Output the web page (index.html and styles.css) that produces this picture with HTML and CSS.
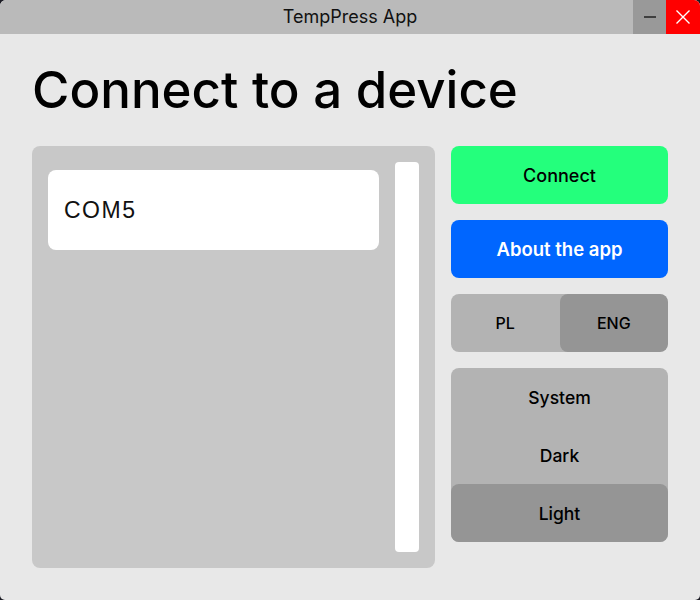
FILE: index.html
```html
<!DOCTYPE html>
<html>
<head>
<meta charset="utf-8">
<link rel="stylesheet" href="styles.css">
</head>
<body>
<div class="window">
  <div class="titlebar">
    <div class="title">TempPress App</div>
    <div class="controls">
      <div class="btn-min"><svg width="14" height="14" viewBox="0 0 14 14"><line x1="1" y1="7" x2="13" y2="7" stroke="#222" stroke-width="1.4"/></svg></div>
      <div class="btn-close"><svg width="16" height="16" viewBox="0 0 16 16"><path d="M1.5 1.5 L14.5 14.5 M14.5 1.5 L1.5 14.5" stroke="#fff" stroke-width="1.4"/></svg></div>
    </div>
  </div>
  <div class="content">
    <h1 class="heading">Connect to a device</h1>
    <div class="main">
      <div class="device-panel">
        <div class="device-list">
          <div class="device-item">COM5</div>
        </div>
        <div class="scrollbar"></div>
      </div>
      <div class="side">
        <div class="action connect">Connect</div>
        <div class="action about">About the app</div>
        <div class="segmented">
          <div class="seg">PL</div>
          <div class="seg selected">ENG</div>
        </div>
        <div class="themes">
          <div class="theme">System</div>
          <div class="theme">Dark</div>
          <div class="theme selected">Light</div>
        </div>
      </div>
    </div>
  </div>
</div>
</body>
</html>
```
FILE: styles.css
```css
html, body {
  margin: 0;
  padding: 0;
  background: #1c1c24;
}
body {
  width: 700px;
  height: 600px;
  overflow: hidden;
  font-family: Inter, "Noto Sans", sans-serif;
}
.window {
  width: 700px;
  height: 600px;
  background: #e8e8e8;
  border-radius: 6px 6px 5px 5px;
  overflow: hidden;
  display: flex;
  flex-direction: column;
}
.titlebar {
  height: 34px;
  background: #bababa;
  display: flex;
  position: relative;
  flex-shrink: 0;
}
.title {
  flex: 1;
  text-align: center;
  line-height: 34px;
  font-size: 18px;
  color: #111;
}
.controls {
  position: absolute;
  right: 0;
  top: 0;
  display: flex;
  height: 34px;
}
.btn-min {
  width: 33px;
  height: 34px;
  background: #999999;
  display: flex;
  align-items: center;
  justify-content: center;
}
.btn-close {
  width: 34px;
  height: 34px;
  background: #ff0000;
  display: flex;
  align-items: center;
  justify-content: center;
}
.content {
  flex: 1;
  padding: 0 32px 32px 32px;
  display: flex;
  flex-direction: column;
}
.heading {
  margin: 0;
  height: 112px;
  line-height: 112px;
  font-size: 51px;
  font-weight: 500;
  color: #000;
}
.main {
  flex: 1;
  display: flex;
  gap: 16px;
}
.device-panel {
  width: 403px;
  background: #c8c8c8;
  border-radius: 8px;
  display: flex;
  padding: 16px;
  box-sizing: border-box;
  gap: 16px;
}
.device-list {
  flex: 1;
  padding-top: 8px;
}
.device-item {
  height: 80px;
  background: #ffffff;
  border-radius: 8px;
  display: flex;
  align-items: center;
  padding-left: 16px;
  font-family: "Liberation Sans", Arial, sans-serif;
  font-size: 23px;
  letter-spacing: 1.5px;
  color: #111;
}
.scrollbar {
  width: 24px;
  background: #ffffff;
  border-radius: 4px;
}
.side {
  width: 217px;
  display: flex;
  flex-direction: column;
  gap: 16px;
}
.action {
  height: 58px;
  border-radius: 8px;
  display: flex;
  align-items: center;
  justify-content: center;
  font-size: 18px;
  font-weight: 500;
}
.connect {
  background: #24ff7c;
  color: #000;
}
.about {
  background: #0066ff;
  color: #fff;
  font-weight: 600;
  font-size: 18.5px;
}
.segmented {
  height: 58px;
  background: #b3b3b3;
  border-radius: 8px;
  display: flex;
  overflow: hidden;
}
.seg {
  flex: 1;
  display: flex;
  align-items: center;
  justify-content: center;
  font-size: 16px;
  font-weight: 500;
  color: #000;
  border-radius: 8px;
}
.seg.selected {
  background: #959595;
}
.themes {
  background: #b3b3b3;
  border-radius: 8px;
  display: flex;
  flex-direction: column;
}
.theme {
  height: 58px;
  display: flex;
  align-items: center;
  justify-content: center;
  font-size: 17.5px;
  font-weight: 500;
  color: #000;
  border-radius: 8px;
}
.theme.selected {
  background: #959595;
}
```
